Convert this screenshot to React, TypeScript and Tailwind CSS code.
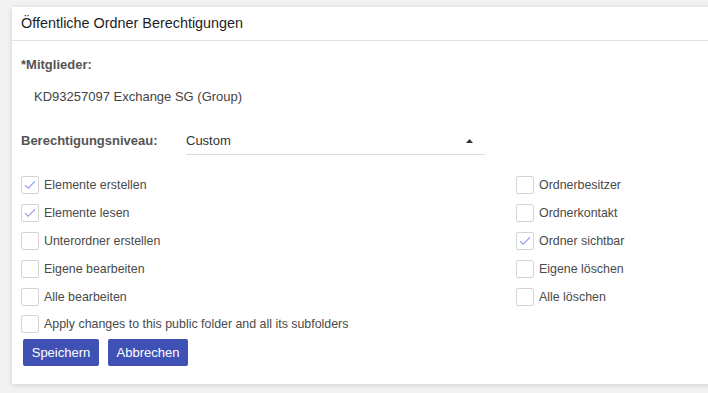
import { useState } from 'react'

type Perm = { label: string; checked: boolean }

const leftPerms: Perm[] = [
  { label: 'Elemente erstellen', checked: true },
  { label: 'Elemente lesen', checked: true },
  { label: 'Unterordner erstellen', checked: false },
  { label: 'Eigene bearbeiten', checked: false },
  { label: 'Alle bearbeiten', checked: false },
]

const rightPerms: Perm[] = [
  { label: 'Ordnerbesitzer', checked: false },
  { label: 'Ordnerkontakt', checked: false },
  { label: 'Ordner sichtbar', checked: true },
  { label: 'Eigene löschen', checked: false },
  { label: 'Alle löschen', checked: false },
]

function Checkbox({ label, checked }: Perm) {
  const [on, setOn] = useState(checked)
  return (
    <label className="flex items-center h-[28px] cursor-pointer" onClick={() => setOn(!on)}>
      <span className="w-[18px] h-[18px] border border-[#d4d4d4] rounded-[2px] bg-white flex items-center justify-center shrink-0">
        {on && (
          <svg width="12" height="10" viewBox="0 0 12 10" fill="none">
            <path d="M1 5.2 L4.3 8.3 L11 1.2" stroke="#8b93f0" strokeWidth="1.1" />
          </svg>
        )}
      </span>
      <span className="ml-[5px] text-[12.4px] text-[#4a4a4a]">{label}</span>
    </label>
  )
}

export default function App() {
  return (
    <div className="w-[708px] h-[393px] bg-[#f3f3f3] pl-[12px] pt-[7px] overflow-hidden font-['Liberation_Sans',Arial,sans-serif]">
      <div className="w-[710px] h-[377px] bg-white shadow-[0_1px_6px_rgba(0,0,0,0.15)]">
        {/* Header */}
        <div className="h-[34px] border-b border-[#e2e2e2] flex items-center pl-[9px]">
          <span className="text-[14.4px] text-[#1e1e1e]">Öffentliche Ordner Berechtigungen</span>
        </div>

        <div className="pl-[9px]">
          <div className="mt-[16px] h-[16px] flex items-center text-[13px] font-bold text-[#555]">
            *Mitglieder:
          </div>
          <div className="mt-[16px] h-[16px] flex items-center pl-[13px] text-[13px] text-[#444]">
            KD93257097 Exchange SG (Group)
          </div>

          {/* Level select */}
          <div className="mt-[27px] flex items-start">
            <div className="w-[165px] h-[18px] flex items-center text-[13px] font-bold text-[#555]">
              Berechtigungsniveau:
            </div>
            <div className="w-[299px] h-[23px] border-b border-[#dcdcdc] flex items-start justify-between">
              <span className="h-[18px] flex items-center text-[13px] text-[#333]">Custom</span>
              <svg width="7" height="4" viewBox="0 0 7 4" className="mr-[12px] mt-[7px]">
                <path d="M0 4 L3.5 0 L7 4 Z" fill="#333" />
              </svg>
            </div>
          </div>

          {/* Permissions */}
          <div className="mt-[16px] flex">
            <div className="w-[495px] flex flex-col">
              {leftPerms.map((p) => (
                <Checkbox key={p.label} {...p} />
              ))}
            </div>
            <div className="flex flex-col">
              {rightPerms.map((p) => (
                <Checkbox key={p.label} {...p} />
              ))}
            </div>
          </div>
          <div className="-mt-[1px]">
            <Checkbox label="Apply changes to this public folder and all its subfolders" checked={false} />
          </div>

          <div className="mt-[1px] flex gap-[9px] pl-[2px]">
            <button className="w-[76px] h-[27px] bg-[#3f51b5] rounded-[2px] text-white text-[13px]">Speichern</button>
            <button className="w-[80px] h-[27px] bg-[#3f51b5] rounded-[2px] text-white text-[13px]">Abbrechen</button>
          </div>
        </div>
      </div>
    </div>
  )
}
